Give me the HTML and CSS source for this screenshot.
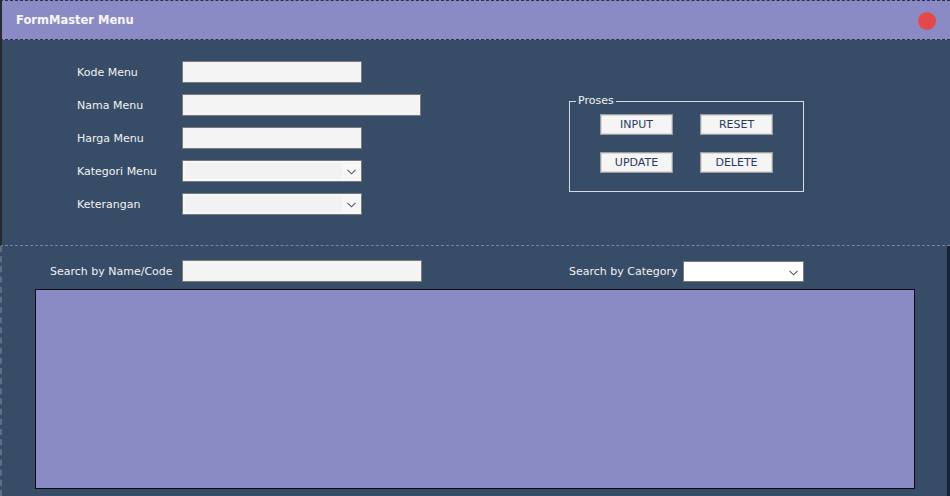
FILE: index.html
```html
<!DOCTYPE html>
<html>
<head>
<meta charset="utf-8">
<title>FormMaster Menu</title>
<link rel="stylesheet" href="styles.css">
</head>
<body>
<div class="window">
  <header class="titlebar">
    <span class="title">FormMaster Menu</span>
    <span class="close"></span>
  </header>
  <section class="top">
    <div class="form">
      <div class="row"><label class="lbl">Kode Menu</label><div class="field w180"></div></div>
      <div class="row"><label class="lbl">Nama Menu</label><div class="field w240"></div></div>
      <div class="row"><label class="lbl">Harga Menu</label><div class="field w180"></div></div>
      <div class="row"><label class="lbl">Kategori Menu</label>
        <div class="field w180 select"><div class="inner"></div>
          <svg class="chev" width="9" height="6" viewBox="0 0 9 6"><polyline points="0.5,0.8 4.5,4.8 8.5,0.8" fill="none" stroke="#5a5a5a" stroke-width="1.1"/></svg>
        </div>
      </div>
      <div class="row"><label class="lbl">Keterangan</label>
        <div class="field w180 select"><div class="inner"></div>
          <svg class="chev" width="9" height="6" viewBox="0 0 9 6"><polyline points="0.5,0.8 4.5,4.8 8.5,0.8" fill="none" stroke="#5a5a5a" stroke-width="1.1"/></svg>
        </div>
      </div>
    </div>
    <div class="group">
      <span class="legend">Proses</span>
      <div class="btns">
        <button class="btn">INPUT</button>
        <button class="btn">RESET</button>
        <button class="btn">UPDATE</button>
        <button class="btn">DELETE</button>
      </div>
    </div>
  </section>
  <section class="bottom">
    <div class="search">
      <div class="srow">
        <label class="slbl">Search by Name/Code</label>
        <div class="field w240"></div>
      </div>
      <div class="srow cat">
        <label class="clbl">Search by Category</label>
        <div class="field w121 select white">
          <svg class="chev" width="9" height="6" viewBox="0 0 9 6"><polyline points="0.5,0.8 4.5,4.8 8.5,0.8" fill="none" stroke="#5a5a5a" stroke-width="1.1"/></svg>
        </div>
      </div>
    </div>
    <div class="table"></div>
  </section>
</div>
</body>
</html>
```
FILE: styles.css
```css
* { box-sizing: border-box; }
html, body { margin: 0; padding: 0; }
body {
  width: 950px;
  height: 496px;
  overflow: hidden;
  background: #374c67;
  font-family: "DejaVu Sans", Verdana, sans-serif;
  font-size: 11px;
  color: #f2f2f2;
}
.window {
  width: 950px;
  height: 496px;
  display: flex;
  flex-direction: column;
}
.titlebar {
  height: 40px;
  flex: none;
  background: #8a8bc4;
  border-top: 1px dashed #2e2f45;
  border-bottom: 1px dashed #2e2f45;
  border-left: 2px solid #26292e;
  display: flex;
  align-items: center;
  justify-content: space-between;
  padding: 0 14px 0 14px;
}
.title {
  font-weight: bold;
  font-size: 11.5px;
  color: #f7f7fb;
  margin-top: -1px;
}
.close {
  width: 18px;
  height: 18px;
  border-radius: 50%;
  background: #e44848;
  margin-top: 1px;
}
.top {
  height: 206px;
  flex: none;
  border-left: 2px solid #26292e;
  border-bottom: 1px dashed #6f88a8;
  display: flex;
  padding: 21px 0 0 75px;
}
.form {
  display: flex;
  flex-direction: column;
  gap: 11px;
  width: 344px;
}
.row {
  display: flex;
  align-items: center;
  height: 22px;
}
.lbl {
  width: 105px;
  flex: none;
}
.field {
  height: 22px;
  background: #f4f4f4;
  border: 1px solid #7a7a7a;
  position: relative;
}
.w180 { width: 180px; }
.w240 { width: 240px; }
.w121 { width: 121px; height: 21px; }
.select .inner {
  position: absolute;
  left: 2px;
  top: 2px;
  bottom: 2px;
  right: 19px;
  background: #f2f2f2;
}
.select { background: #f7f7f7; }
.select.white { background: #ffffff; }
.chev {
  position: absolute;
  right: 5px;
  top: 8px;
}
.group {
  position: relative;
  margin-left: 148px;
  margin-top: 40px;
  width: 235px;
  height: 91px;
  border: 1px solid #d6dbe2;
  padding: 12px 0 0 30px;
}
.legend {
  position: absolute;
  left: 6px;
  top: -8px;
  padding: 0 2px;
  background: #374c67;
  line-height: 14px;
  color: #f2f2f2;
}
.btns {
  display: grid;
  grid-template-columns: 73px 73px;
  column-gap: 27px;
  row-gap: 17px;
}
.btn {
  height: 21px;
  width: 73px;
  padding: 0;
  margin: 0;
  background: #f5f5f5;
  border: 1px solid #9c9c9c;
  box-shadow: inset 0 0 0 1px #dadada;
  font-family: "DejaVu Sans", Verdana, sans-serif;
  font-size: 11px;
  color: #2b3864;
}
.bottom {
  flex: 1;
  border-left: 2px dashed #5d6f86;
  border-right: 3px solid #1b2230;
  padding: 14px 0 0 33px;
  display: flex;
  flex-direction: column;
}
.search {
  display: flex;
  align-items: center;
  height: 22px;
}
.srow {
  display: flex;
  align-items: center;
}
.slbl {
  margin-left: 15px;
  width: 132px;
  flex: none;
}
.cat {
  margin-left: 147px;
}
.clbl {
  width: 114px;
  flex: none;
}
.table {
  margin-top: 7px;
  width: 880px;
  height: 200px;
  background: #8a8bc4;
  border: 1px solid #0c0c14;
}
```
